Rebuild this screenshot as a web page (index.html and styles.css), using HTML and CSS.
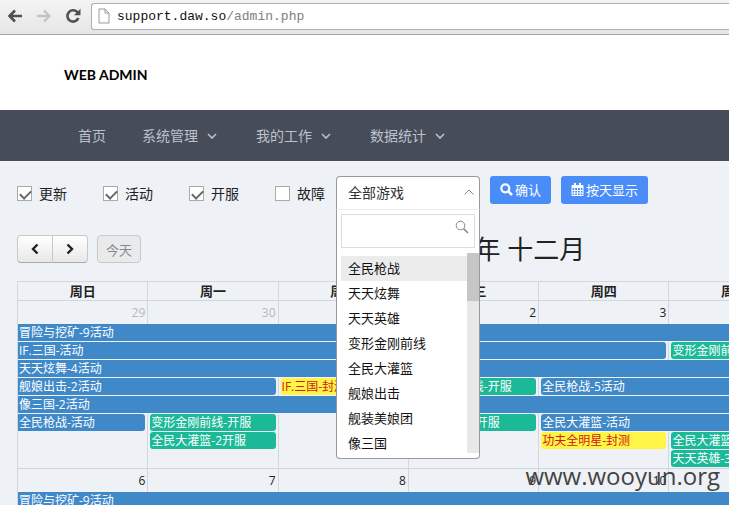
FILE: index.html
```html
<!DOCTYPE html>
<html lang="zh-CN">
<head>
<meta charset="utf-8">
<title>WEB ADMIN</title>
<link rel="stylesheet" href="styles.css">
</head>
<body>
<div class="browser">
  <button class="tool" aria-label="后退"><svg width="16" height="14" viewBox="0 0 16 14"><path d="M8 1.5L2.5 7L8 12.5M3 7H15" fill="none" stroke="#505050" stroke-width="2.6"/></svg></button>
  <button class="tool" aria-label="前进" disabled><svg width="16" height="14" viewBox="0 0 16 14"><path d="M8 1.5L13.5 7L8 12.5M13 7H1" fill="none" stroke="#c4c4c4" stroke-width="2.4"/></svg></button>
  <button class="tool" aria-label="刷新"><svg width="16" height="16" viewBox="0 0 16 16"><path d="M12.7 4.6A5.7 5.7 0 1 0 13.4 10" fill="none" stroke="#505050" stroke-width="2.6"/><path d="M15.5 .8V7.3H9z" fill="#505050"/></svg></button>
  <div class="address">
    <svg width="12" height="16" viewBox="0 0 12 16"><path d="M1 1H7L11 5V15H1zM7 1V5H11" fill="#fff" stroke="#999"/></svg>
    <span class="url">support.daw.so<span class="path">/admin.php</span></span>
  </div>
</div>
<header class="brand">WEB ADMIN</header>
<nav class="menu">
  <a href="#">首页</a>
  <a href="#">系统管理<svg width="10" height="6" viewBox="0 0 10 6"><path d="M1 1L5 5L9 1"/></svg></a>
  <a href="#">我的工作<svg width="10" height="6" viewBox="0 0 10 6"><path d="M1 1L5 5L9 1"/></svg></a>
  <a href="#">数据统计<svg width="10" height="6" viewBox="0 0 10 6"><path d="M1 1L5 5L9 1"/></svg></a>
</nav>
<main class="content">
  <form class="filters">
    <div class="checks">
      <label><input type="checkbox" checked>更新</label>
      <label><input type="checkbox" checked>活动</label>
      <label><input type="checkbox" checked>开服</label>
      <label><input type="checkbox">故障</label>
    </div>
    <div class="picker">
      <button type="button" class="picker-head" aria-expanded="true">全部游戏<svg width="10" height="6" viewBox="0 0 10 6"><path d="M.5 5.5L5 1L9.500 5.500" fill="none" stroke="#888"/></svg></button>
      <div class="picker-menu">
        <div class="search">
          <input type="text" aria-label="搜索游戏">
          <svg width="14" height="14" viewBox="0 0 14 14"><circle cx="5.500" cy="5.500" r="4.300" fill="none" stroke="#888"/><path d="M8.600 8.600L13 13" stroke="#888" stroke-width="1.500"/></svg>
        </div>
        <div class="list">
          <ul role="listbox" aria-label="游戏">
            <li role="option" class="active" aria-selected="true">全民枪战</li>
            <li role="option">天天炫舞</li>
            <li role="option">天天英雄</li>
            <li role="option">变形金刚前线</li>
            <li role="option">全民大灌篮</li>
            <li role="option">舰娘出击</li>
            <li role="option">舰装美娘团</li>
            <li role="option">像三国</li>
          </ul>
          <div class="track"><div class="thumb"></div></div>
        </div>
      </div>
    </div>
    <button type="button" class="action"><svg width="13" height="13" viewBox="0 0 13 13"><circle cx="5.300" cy="5.300" r="4" fill="none" stroke="#fff" stroke-width="2.200"/><path d="M8.300 8.300L12 12" stroke="#fff" stroke-width="2.600"/></svg>确认</button>
    <button type="button" class="action"><svg width="13" height="13" viewBox="0 0 13 13"><path d="M1 2.500H12V12.500H1zM1 7.500H12M1 10H12M3.700 5V12.500M6.500 5V12.500M9.300 5V12.500" fill="none" stroke="#fff"/><path d="M1 2.500H12V5H1zM3 0H5V3H3zM8 0H10V3H8z" fill="#fff"/></svg>按天显示</button>
  </form>
  <div class="toolbar">
    <div class="pager">
      <button aria-label="上个月"><svg width="8" height="12" viewBox="0 0 8 12"><path d="M6.500 1.500L2 6L6.500 10.500"/></svg></button>
      <button aria-label="下个月"><svg width="8" height="12" viewBox="0 0 8 12"><path d="M1.500 1.500L6 6L1.500 10.500"/></svg></button>
    </div>
    <button class="today" disabled>今天</button>
    <h2>2015年 十二月</h2>
  </div>
  <table class="calendar">
    <thead>
      <tr><th>周日</th><th>周一</th><th>周二</th><th>周三</th><th>周四</th><th>周五</th><th>周六</th></tr>
    </thead>
    <tbody>
      <tr class="days"><td class="other">29</td><td class="other">30</td><td>1</td><td>2</td><td>3</td><td>4</td><td>5</td></tr>
      <tr><td colspan="7" class="from to"><div class="event">冒险与挖矿-9活动</div></td></tr>
      <tr><td colspan="5" class="from"><div class="event">IF.三国-活动</div></td><td><div class="event open">变形金刚前线-开服</div></td><td></td></tr>
      <tr><td colspan="7" class="from to"><div class="event">天天炫舞-4活动</div></td></tr>
      <tr><td colspan="2" class="from"><div class="event">舰娘出击-2活动</div></td><td><div class="event test">IF.三国-封测</div></td><td><div class="event open">变形金刚前线-开服</div></td><td colspan="3" class="to"><div class="event">全民枪战-5活动</div></td></tr>
      <tr><td colspan="7" class="from to"><div class="event">像三国-2活动</div></td></tr>
      <tr><td class="from"><div class="event">全民枪战-活动</div></td><td><div class="event open">变形金刚前线-开服</div></td><td></td><td><div class="event open">舰装美娘团-开服</div></td><td colspan="3" class="to"><div class="event">全民大灌篮-活动</div></td></tr>
      <tr><td></td><td><div class="event open">全民大灌篮-2开服</div></td><td></td><td></td><td><div class="event test">功夫全明星-封测</div></td><td><div class="event open">全民大灌篮-2开服</div></td><td></td></tr>
      <tr><td></td><td></td><td></td><td></td><td></td><td><div class="event open">天天英雄-3开服</div></td><td></td></tr>
    </tbody>
    <tbody>
      <tr class="days"><td>6</td><td>7</td><td>8</td><td>9</td><td>10</td><td>11</td><td>12</td></tr>
      <tr><td colspan="7" class="from to"><div class="event">冒险与挖矿-9活动</div></td></tr>
    </tbody>
  </table>
</main>
<div class="watermark">www.wooyun.org</div>
</body>
</html>
```
FILE: styles.css
```css
* { box-sizing: border-box; }

body {
  margin: 0;
  height: 100vh;
  overflow: hidden;
  position: relative;
  background: #eef2f7;
  color: #222;
  font-family: "Open Sans", "Noto Sans CJK SC", sans-serif;
  font-size: 14px;
}

button, input { font: inherit; }
button { padding: 0; margin: 0; }
svg { flex: none; }

/* Browser bar */
.browser {
  display: flex;
  align-items: center;
  gap: 13px;
  height: 35px;
  padding: 0 0 2px 7px;
  background: linear-gradient(#f4f4f4, #e6e6e6);
  border-bottom: 1px solid #a5a5a5;
}
.tool { display: flex; border: 0; background: none; }
.address {
  flex: 1;
  display: flex;
  align-items: center;
  gap: 7px;
  height: 27px;
  margin-left: -3px;
  padding-left: 6px;
  background: #fff;
  border: 1px solid #b0b0b0;
  border-right: 0;
  border-radius: 3px 0 0 3px;
}
.url {
  font-family: "Liberation Mono", monospace;
  font-size: 13px;
  color: #111;
}
.path { color: #808080; }

/* Header */
.brand {
  height: 75px;
  padding-left: 64px;
  background: #fff;
  color: #000;
  font: bold 14px/79px Lato, sans-serif;
}
.menu {
  display: flex;
  gap: 36px;
  height: 51px;
  padding: 0 0 2px 78px;
  background: #464c58;
}
.menu a {
  display: flex;
  align-items: center;
  gap: 9px;
  color: #bcc2cf;
  text-decoration: none;
}
.menu svg {
  margin: 2px 3px 0 0;
  fill: none;
  stroke: #bcc2cf;
  stroke-width: 1.6;
}

/* Filters */
.content { padding: 15px 0 0 17px; }
.filters { display: flex; align-items: flex-start; gap: 10px; }
.checks { display: flex; height: 34px; }
.checks label {
  display: flex;
  align-items: center;
  gap: 7px;
  width: 86px;
}
.checks label:last-child { width: 51px; }
.checks input {
  appearance: none;
  flex: none;
  width: 15px;
  height: 15px;
  margin: 0;
  background: #fff;
  border: 1px solid #aaa;
}
.checks input:checked::before {
  content: "";
  display: block;
  width: 9px;
  height: 5px;
  margin: 3px 2px;
  border: solid #666;
  border-width: 0 0 2px 2px;
  transform: rotate(-45deg);
}
.picker { position: relative; width: 144px; height: 34px; }
.picker-head {
  display: flex;
  align-items: center;
  justify-content: space-between;
  width: 100%;
  height: 34px;
  padding: 0 5px 2px 11px;
  background: #fff;
  border: 1px solid #999;
  border-bottom-color: #eee;
  border-radius: 4px 4px 0 0;
  color: #333;
}
.picker-menu {
  position: absolute;
  z-index: 2;
  top: 34px;
  left: 0;
  width: 100%;
  padding: 4px 0 5px 4px;
  background: #fff;
  border: 1px solid #999;
  border-top: 0;
  border-radius: 0 0 4px 4px;
}
.search {
  display: flex;
  align-items: flex-start;
  height: 34px;
  margin-right: 4px;
  padding: 5px;
  border: 1px solid #ddd;
}
.search input {
  flex: 1;
  min-width: 0;
  height: 20px;
  padding: 0;
  border: 0;
  outline: 0;
}
.list { display: flex; margin-top: 5px; }
.list ul {
  flex: 1;
  margin: 0;
  padding: 3px 0 0;
  list-style: none;
  font-size: 13px;
  line-height: 25px;
  height: 200px;
  overflow: hidden;
  color: #111;
}
.list li { padding-left: 7px; }
.active { background: #ececec; }
.track { width: 12px; background: #e8e8e8; }
.thumb { height: 48px; background: #c6c6c6; }
.action {
  display: flex;
  align-items: center;
  gap: 2px;
  height: 28px;
  padding: 0 10px 2px;
  background: #4b8df8;
  border: 0;
  border-radius: 3px;
  color: #fff;
  font-size: 13px;
}

/* Calendar */
.toolbar { display: flex; align-items: center; height: 28px; margin-top: 25px; }
.pager { display: flex; }
.pager button, .today {
  display: flex;
  align-items: center;
  justify-content: center;
  height: 28px;
  border: 1px solid #c8c8c8;
  background: linear-gradient(#fff, #e8e8e8);
}
.pager button { width: 36px; border-bottom-color: #aaa; }
.pager button:first-child { border-radius: 4px 0 0 4px; }
.pager button:last-child { width: 35px; border-left: 0; border-radius: 0 4px 4px 0; }
.pager svg { fill: none; stroke: #222; stroke-width: 2.4; }
.today {
  width: 44px;
  margin-left: 9px;
  background: #e8eaec;
  border-radius: 4px;
  color: #888;
  font-size: 13px;
}
.toolbar h2 {
  margin: 0 0 0 274px;
  font-size: 26px;
  font-weight: 400;
  line-height: 28px;
  white-space: nowrap;
}
.calendar {
  width: 100%;
  min-width: 912px;
  margin-top: 18px;
  table-layout: fixed;
  border-collapse: separate;
  border-spacing: 0;
  font-size: 12px;
}
.calendar th, .calendar td { padding: 0; border-left: 1px solid #d3d7dc; }
.calendar th {
  height: 19px;
  border-top: 1px solid #d3d7dc;
  font-size: 13px;
  line-height: 18px;
}
.calendar td { height: 18px; padding: 0 2px 1px; vertical-align: top; }
.calendar .days td {
  height: 24px;
  padding: 0 2px 0 0;
  border-top: 1px solid #d3d7dc;
  line-height: 23px;
  text-align: right;
}
.calendar .days .other { color: #b4b8be; }
.calendar td.from { padding-left: 0; }
.calendar td.to { padding-right: 0; }
.event {
  height: 17px;
  padding-left: 1px;
  overflow: hidden;
  border-radius: 3px;
  background: #3f89c9;
  color: #fff;
  line-height: 17px;
  white-space: nowrap;
}
.from .event { border-top-left-radius: 0; border-bottom-left-radius: 0; }
.open { background: #1cb998; }
.test { background: #fff546; color: #d01818; }

.watermark {
  position: absolute;
  right: 9px;
  bottom: 12px;
  color: #444;
  font-size: 24px;
  line-height: 34px;
}
```
